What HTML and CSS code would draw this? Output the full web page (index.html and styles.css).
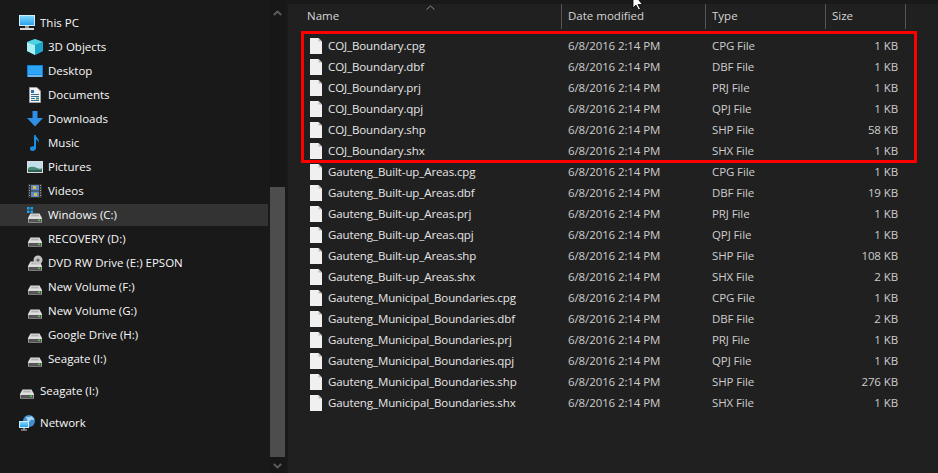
FILE: index.html
```html
<!DOCTYPE html>
<html lang="en">
<head>
<meta charset="utf-8">
<title>File Explorer</title>
<link rel="stylesheet" href="styles.css">
</head>
<body>
<svg class="defs" width="0" height="0" aria-hidden="true">
  <defs>
    <linearGradient id="screen" x1="0" y1="0" x2="0" y2="1"><stop offset="0" stop-color="#7fd6fb"/><stop offset="1" stop-color="#2ba3ee"/></linearGradient>
    <symbol id="drive" viewBox="0 0 16 16">
      <path d="M3.500 6.500h9L15 11H1z" fill="#e2e2e2"/>
      <path d="M4.500 7.500h7l1 2h-9z" fill="#b4b4b4"/>
      <rect x="1" y="11" width="14" height="4.500" fill="#d8d8d8"/>
      <rect x="1.500" y="12" width="13" height="3" fill="#555"/>
      <rect x="11" y="12.500" width="2" height="1.500" fill="#37d23c"/>
    </symbol>
    <symbol id="file" viewBox="0 0 14 16">
      <path d="M1 0h8.500L13 3.500V16H1z" fill="#f0f0f0"/>
      <path d="M9.500 0v3.500H13z" fill="#bdbdbd"/>
    </symbol>
  </defs>
</svg>
<div class="window">
  <nav class="nav">
    <div class="tree">
      <div class="item top"><svg class="ico" viewBox="0 0 16 16"><rect x="0" y="0" width="16" height="11" fill="#cfeefc"/><rect x="1" y="1" width="14" height="9" fill="url(#screen)"/><rect x="6" y="11" width="4" height="2" fill="#9a9a9a"/><rect x="1" y="13" width="14" height="2" fill="#d8d8d8"/></svg><span>This PC</span></div>
      <div class="item"><svg class="ico" viewBox="0 0 16 16"><path d="M8 0l8 3v9l-8 4-8-4V3z" fill="#1e9fbd"/><path d="M0 3l8 3v10l-8-4z" fill="#a8f0f2"/><path d="M8 0l8 3-8 3-8-3z" fill="#4fd3de"/><path d="M8 6l8-3v9l-8 4z" fill="#1aa7c9"/></svg><span>3D Objects</span></div>
      <div class="item"><svg class="ico" viewBox="0 0 16 12"><rect width="16" height="12" fill="#0f7fd8"/><rect x="1" y="1" width="14" height="8.500" fill="#2ea5f5"/><rect x="1" y="10.500" width="14" height="1" fill="#d6eefc"/></svg><span>Desktop</span></div>
      <div class="item"><svg class="ico" viewBox="0 0 16 16"><path d="M2.500.5H10L13.500 4v11.500h-11z" fill="#f4f4f4" stroke="#a0a0a0"/><rect x="4" y="3" width="3" height="3" fill="#2b6fb0"/><path d="M4 7.500h8M4 9.500h8M4 11.500h4M4 13.500h8" stroke="#2f6f8f"/><rect x="9" y="10.500" width="3" height="2" fill="#3a8c7a"/></svg><span>Documents</span></div>
      <div class="item"><svg class="ico" viewBox="0 0 16 16"><path d="M5.500 0h5v7H16l-8 8.500L0 7h5.500z" fill="#2f8fe6"/></svg><span>Downloads</span></div>
      <div class="item"><svg class="ico" viewBox="0 0 16 16"><path d="M7 0h1.500c.5 2.500 4 3.500 3.500 8-.5-2-2-3-3-3.500V13c0 2-1.700 3-3.500 3S3 15 3 13.500 4.800 11 7 11.500z" fill="#1a8fe8"/></svg><span>Music</span></div>
      <div class="item"><svg class="ico" viewBox="0 0 16 12"><rect width="16" height="12" fill="#dcdcdc"/><rect x="1" y="1" width="14" height="10" fill="#bfe0ea"/><path d="M1 7c3-2 6-1.500 9 0s4 .5 5 0v4H1z" fill="#4f8a76"/><path d="M1 9h14v2H1z" fill="#2d5f5a"/></svg><span>Pictures</span></div>
      <div class="item"><svg class="ico" viewBox="0 0 16 16"><rect x="1" y="1" width="14" height="14" fill="#333"/><rect x="4" y="2" width="8" height="5.500" fill="#5a8cc8"/><rect x="4" y="8.500" width="8" height="5.500" fill="#5a8cc8"/><rect x="6" y="3" width="3" height="3" fill="#d8b850"/><rect x="7" y="10" width="3" height="3" fill="#d8b850"/><path d="M2.500 2v12M13.500 2v12" stroke="#aaa" stroke-dasharray="1 1.500"/></svg><span>Videos</span></div>
      <div class="item sel"><svg class="ico" viewBox="0 0 16 16"><use href="#drive"/><path d="M0 0h2.500v2.500H0zM3.500 0H6v2.500H3.500zM0 3.500h2.500V6H0zM3.500 3.500H6V6H3.500z" fill="#19a3ee"/></svg><span>Windows (C:)</span></div>
      <div class="item"><svg class="ico"><use href="#drive"/></svg><span>RECOVERY (D:)</span></div>
      <div class="item"><svg class="ico" viewBox="0 0 16 16"><use href="#drive"/><circle cx="11" cy="5" r="4.500" fill="#c4c4c4"/><circle cx="11" cy="5" r="1.600" fill="#666"/></svg><span>DVD RW Drive (E:) EPSON</span></div>
      <div class="item"><svg class="ico"><use href="#drive"/></svg><span>New Volume (F:)</span></div>
      <div class="item"><svg class="ico"><use href="#drive"/></svg><span>New Volume (G:)</span></div>
      <div class="item"><svg class="ico"><use href="#drive"/></svg><span>Google Drive (H:)</span></div>
      <div class="item"><svg class="ico"><use href="#drive"/></svg><span>Seagate (I:)</span></div>
      <div class="item top spaced"><svg class="ico"><use href="#drive"/></svg><span>Seagate (I:)</span></div>
      <div class="item top spaced"><svg class="ico" viewBox="0 0 16 16"><circle cx="10" cy="6" r="6" fill="#3f8fd0"/><path d="M7 1.500c2 1 4 1 5-.5 2 1 3 3 3 4-2 0-3-1-4 1s-3 0-4-4.500z" fill="#a9d6ee"/><rect x="0" y="6" width="10" height="7" fill="#cfeefc"/><rect x="1" y="7" width="8" height="5" fill="url(#screen)"/><rect x="4" y="13" width="2" height="1.500" fill="#999"/><rect x="2" y="14.500" width="6" height="1" fill="#ccc"/></svg><span>Network</span></div>
    </div>
    <div class="scrollbar">
      <svg class="chev first" viewBox="0 0 9 6"><path d="M.8 5L4.500 1.500 8.200 5" fill="none" stroke="#5e5e5e" stroke-width="1.800"/></svg>
      <div class="thumb-track"><div class="thumb"></div></div>
      <svg class="chev last" viewBox="0 0 9 6"><path d="M.8 1L4.500 4.500 8.200 1" fill="none" stroke="#5e5e5e" stroke-width="1.800"/></svg>
    </div>
  </nav>
  <main class="content">
    <div class="row head">
      <div class="h-name">Name</div>
      <div class="h">Date modified</div>
      <div class="h">Type</div>
      <div class="h">Size</div>
    </div>
    <svg class="sort" viewBox="0 0 9 5"><path d="M.5 4.500L4.500 1l4 3.500" fill="none" stroke="#8a8a8a"/></svg>
    <div class="files">
      <div class="row"><div class="name"><svg class="file"><use href="#file"/></svg>COJ_Boundary.cpg</div><div class="date">6/8/2016 2:14 PM</div><div class="type">CPG File</div><div class="size">1 KB</div></div>
      <div class="row"><div class="name"><svg class="file"><use href="#file"/></svg>COJ_Boundary.dbf</div><div class="date">6/8/2016 2:14 PM</div><div class="type">DBF File</div><div class="size">1 KB</div></div>
      <div class="row"><div class="name"><svg class="file"><use href="#file"/></svg>COJ_Boundary.prj</div><div class="date">6/8/2016 2:14 PM</div><div class="type">PRJ File</div><div class="size">1 KB</div></div>
      <div class="row"><div class="name"><svg class="file"><use href="#file"/></svg>COJ_Boundary.qpj</div><div class="date">6/8/2016 2:14 PM</div><div class="type">QPJ File</div><div class="size">1 KB</div></div>
      <div class="row"><div class="name"><svg class="file"><use href="#file"/></svg>COJ_Boundary.shp</div><div class="date">6/8/2016 2:14 PM</div><div class="type">SHP File</div><div class="size">58 KB</div></div>
      <div class="row"><div class="name"><svg class="file"><use href="#file"/></svg>COJ_Boundary.shx</div><div class="date">6/8/2016 2:14 PM</div><div class="type">SHX File</div><div class="size">1 KB</div></div>
      <div class="row"><div class="name"><svg class="file"><use href="#file"/></svg>Gauteng_Built-up_Areas.cpg</div><div class="date">6/8/2016 2:14 PM</div><div class="type">CPG File</div><div class="size">1 KB</div></div>
      <div class="row"><div class="name"><svg class="file"><use href="#file"/></svg>Gauteng_Built-up_Areas.dbf</div><div class="date">6/8/2016 2:14 PM</div><div class="type">DBF File</div><div class="size">19 KB</div></div>
      <div class="row"><div class="name"><svg class="file"><use href="#file"/></svg>Gauteng_Built-up_Areas.prj</div><div class="date">6/8/2016 2:14 PM</div><div class="type">PRJ File</div><div class="size">1 KB</div></div>
      <div class="row"><div class="name"><svg class="file"><use href="#file"/></svg>Gauteng_Built-up_Areas.qpj</div><div class="date">6/8/2016 2:14 PM</div><div class="type">QPJ File</div><div class="size">1 KB</div></div>
      <div class="row"><div class="name"><svg class="file"><use href="#file"/></svg>Gauteng_Built-up_Areas.shp</div><div class="date">6/8/2016 2:14 PM</div><div class="type">SHP File</div><div class="size">108 KB</div></div>
      <div class="row"><div class="name"><svg class="file"><use href="#file"/></svg>Gauteng_Built-up_Areas.shx</div><div class="date">6/8/2016 2:14 PM</div><div class="type">SHX File</div><div class="size">2 KB</div></div>
      <div class="row"><div class="name"><svg class="file"><use href="#file"/></svg>Gauteng_Municipal_Boundaries.cpg</div><div class="date">6/8/2016 2:14 PM</div><div class="type">CPG File</div><div class="size">1 KB</div></div>
      <div class="row"><div class="name"><svg class="file"><use href="#file"/></svg>Gauteng_Municipal_Boundaries.dbf</div><div class="date">6/8/2016 2:14 PM</div><div class="type">DBF File</div><div class="size">2 KB</div></div>
      <div class="row"><div class="name"><svg class="file"><use href="#file"/></svg>Gauteng_Municipal_Boundaries.prj</div><div class="date">6/8/2016 2:14 PM</div><div class="type">PRJ File</div><div class="size">1 KB</div></div>
      <div class="row"><div class="name"><svg class="file"><use href="#file"/></svg>Gauteng_Municipal_Boundaries.qpj</div><div class="date">6/8/2016 2:14 PM</div><div class="type">QPJ File</div><div class="size">1 KB</div></div>
      <div class="row"><div class="name"><svg class="file"><use href="#file"/></svg>Gauteng_Municipal_Boundaries.shp</div><div class="date">6/8/2016 2:14 PM</div><div class="type">SHP File</div><div class="size">276 KB</div></div>
      <div class="row"><div class="name"><svg class="file"><use href="#file"/></svg>Gauteng_Municipal_Boundaries.shx</div><div class="date">6/8/2016 2:14 PM</div><div class="type">SHX File</div><div class="size">1 KB</div></div>
    </div>
    <div class="highlight"></div>
  </main>
</div>
<svg class="cursor" viewBox="0 0 12 11"><path d="M1 -7v15l3-3 2.500 5 2-1L6 4.500h4.500z" fill="#fff" stroke="#000" stroke-width=".8"/></svg>
</body>
</html>
```
FILE: styles.css
```css
* { box-sizing: border-box; }
html, body { margin: 0; height: 100%; }
body {
  background: #191919;
  font-family: "Open Sans", "Liberation Sans", sans-serif;
  font-size: 11.5px;
  line-height: 16px;
  overflow: hidden;
  position: relative;
}
.defs { position: absolute; }
.window { display: flex; height: 473px; }

.nav { display: flex; width: 288px; background: #191919; flex: none; }
.tree { width: 270px; padding-top: 11px; flex: none; }
.item {
  display: flex;
  align-items: center;
  height: 24px;
  width: 268px;
  padding-left: 27px;
  gap: 5px;
  color: #f8f8f8;
  white-space: nowrap;
}
.item.top { padding-left: 19px; }
.item.spaced { margin-top: 8px; }
.item.sel { background: #333; height: 22px; margin: 1px 0; }
.ico { width: 16px; height: 16px; flex: none; }

.scrollbar {
  width: 15px;
  display: flex;
  flex-direction: column;
  align-items: center;
  background: #171717;
}
.chev { width: 9px; height: 6px; flex: none; }
.chev.first { margin: 10px 0 6px; }
.chev.last { margin: 6px 0 4px; }
.thumb-track { flex: 1; display: flex; flex-direction: column; justify-content: flex-end; }
.thumb { width: 15px; height: 270px; background: #4d4d4d; }

.content { flex: 1; background: #202020; margin-top: 4px; position: relative; min-width: 0; }
.row {
  display: grid;
  grid-template-columns: 274px 144px 120px 80px;
  height: 21px;
  align-items: center;
  color: #cdcdcd;
  letter-spacing: -0.1px;
  white-space: nowrap;
}
.row.head { height: 25px; color: #d6d6d6; letter-spacing: 0; }
.h-name { padding: 0 0 2px 19px; height: 100%; display: flex; align-items: center; border-right: 1px solid #555; }
.h { padding: 0 0 2px 6px; height: 100%; display: flex; align-items: center; border-right: 1px solid #555; }
.files { padding-top: 6px; }
.name { display: flex; align-items: center; padding-left: 21px; gap: 5px; color: #e6e6e6; }
.file { width: 14px; height: 16px; flex: none; }
.date { padding-left: 6px; }
.type { padding-left: 6px; }
.size { text-align: right; padding-right: 8px; }

.sort { position: absolute; left: 138px; top: 1px; width: 9px; height: 5px; }
.highlight {
  position: absolute;
  left: 13px;
  top: 27px;
  width: 616px;
  height: 132px;
  border: 3px solid #f00;
}
.cursor { position: absolute; left: 632px; top: 0; width: 12px; height: 11px; }
```
